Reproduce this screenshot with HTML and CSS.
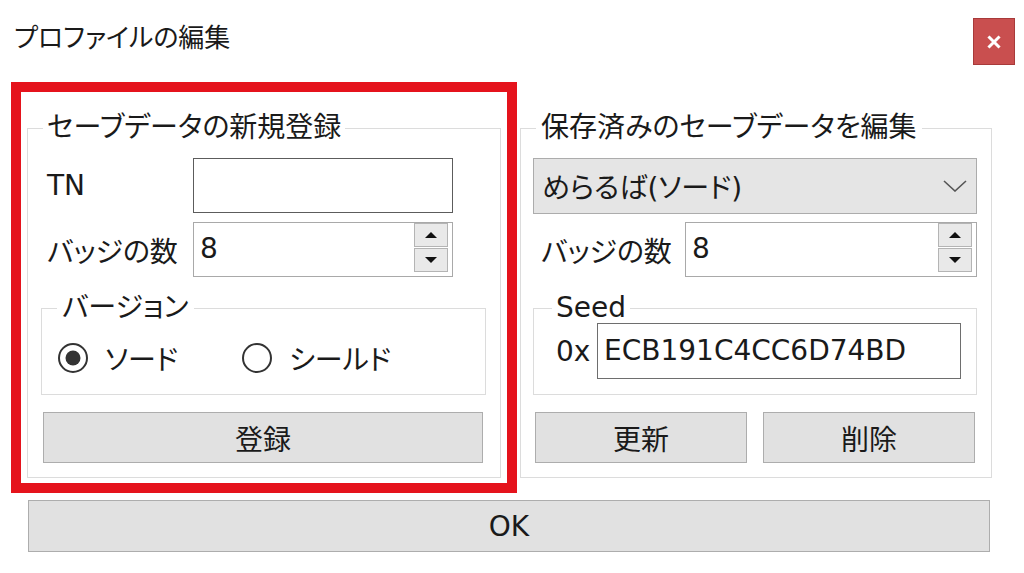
FILE: index.html
```html
<!DOCTYPE html>
<html lang="ja">
<head>
<meta charset="utf-8">
<title>プロファイルの編集</title>
<link rel="stylesheet" href="styles.css">
</head>
<body>
<div class="dialog">
  <header class="titlebar">
    <h1 class="title">プロファイルの編集</h1>
    <div class="close">
      <svg width="14" height="14" viewBox="0 0 14 14"><path d="M2.5 2.5 L11.5 11.5 M11.5 2.5 L2.5 11.5" stroke="#fff" stroke-width="3" stroke-linecap="square"/></svg>
    </div>
  </header>
  <main class="main">
    <div class="highlight">
      <fieldset class="group group-new">
        <legend>セーブデータの新規登録</legend>
        <div class="row">
          <span class="label">TN</span>
          <div class="textbox focus"></div>
        </div>
        <div class="row row-gap">
          <span class="label">バッジの数</span>
          <div class="spinbox">
            <span class="value">8</span>
            <div class="spin"><span class="spin-btn"><i class="tri-up"></i></span><span class="spin-btn"><i class="tri-down"></i></span></div>
          </div>
        </div>
        <fieldset class="group sub version">
          <legend>バージョン</legend>
          <div class="radios">
            <span class="radio radio-first">
              <svg width="32" height="32" viewBox="0 0 32 32"><circle cx="16" cy="16" r="14" fill="#fff" stroke="#333" stroke-width="2"/><circle cx="16" cy="16" r="7.5" fill="#333"/></svg>
              <span>ソード</span>
            </span>
            <span class="radio">
              <svg width="32" height="32" viewBox="0 0 32 32"><circle cx="16" cy="16" r="14" fill="#fff" stroke="#333" stroke-width="2"/></svg>
              <span>シールド</span>
            </span>
          </div>
        </fieldset>
        <div class="btn btn-wide">登録</div>
      </fieldset>
    </div>
    <fieldset class="group group-edit">
      <legend>保存済みのセーブデータを編集</legend>
      <div class="combo">
        <span>めらるば(ソード)</span>
        <svg class="chevron" width="24" height="12" viewBox="0 0 24 12"><path d="M1 1 L12 11 L23 1" fill="none" stroke="#555" stroke-width="1.6"/></svg>
      </div>
      <div class="row row-gap row-edit">
        <span class="label label-edit">バッジの数</span>
        <div class="spinbox spinbox-edit">
          <span class="value">8</span>
          <div class="spin"><span class="spin-btn"><i class="tri-up"></i></span><span class="spin-btn"><i class="tri-down"></i></span></div>
        </div>
      </div>
      <fieldset class="group sub seed">
        <legend>Seed</legend>
        <div class="seed-row">
          <span class="prefix">0x</span>
          <div class="textbox seed-box">ECB191C4CC6D74BD</div>
        </div>
      </fieldset>
      <div class="btn-pair">
        <div class="btn">更新</div>
        <div class="btn">削除</div>
      </div>
    </fieldset>
  </main>
  <div class="btn ok">OK</div>
</div>
</body>
</html>
```

FILE: styles.css
```css
html, body {
  margin: 0;
  padding: 0;
  background: #fff;
}
body {
  width: 1024px;
  height: 573px;
  overflow: hidden;
  font-family: "DejaVu Sans", "Noto Sans CJK JP", sans-serif;
  font-feature-settings: "palt";
  font-size: 28px;
  color: #1a1a1a;
}
.dialog {
  display: flex;
  flex-direction: column;
}
.titlebar {
  display: flex;
  justify-content: space-between;
  align-items: flex-start;
  height: 82px;
}
.title {
  margin: 0;
  padding: 22px 0 0 14px;
  font-size: 26px;
  font-weight: normal;
  line-height: 32px;
}
.close {
  width: 42px;
  height: 47px;
  margin: 18px 9px 0 0;
  box-sizing: border-box;
  background: #c94f4f;
  border: 1px solid #a83a3a;
  display: flex;
  align-items: center;
  justify-content: center;
}
.main {
  display: flex;
  align-items: flex-start;
  padding-left: 11px;
}
.highlight {
  width: 506px;
  box-sizing: border-box;
  border: 10px solid #e5131c;
  padding: 18px 6px 5px 6px;
}
.group {
  margin: 0;
  min-width: 0;
  box-sizing: border-box;
  border: 1px solid #dcdcdc;
}
.group > legend {
  line-height: 36px;
  height: 36px;
  padding: 0 4px;
}
.group-new {
  width: 474px;
  padding: 12px 14px 14px 13px;
}
.group-new > legend {
  margin-left: 2px;
}
.group-edit {
  width: 472px;
  margin-left: 3px;
  margin-top: 28px;
  padding: 12px 14px 14px 12px;
}
.group-edit > legend {
  margin-left: 3px;
  padding: 0 5px;
}
.row {
  display: flex;
  align-items: center;
  height: 55px;
  padding-left: 6px;
}
.row-gap {
  margin-top: 9px;
}
.row-edit {
  margin-top: 8px;
  padding-left: 8px;
}
.label {
  width: 146px;
  flex: none;
}
.label-edit {
  width: 144px;
}
.textbox {
  box-sizing: border-box;
  width: 260px;
  height: 55px;
  border: 1px solid #7a7a7a;
  background: #fff;
}
.textbox.focus {
  border-color: #5c5c5c;
}
.spinbox {
  box-sizing: border-box;
  width: 260px;
  height: 55px;
  border: 1px solid #a9a9a9;
  background: #fff;
  display: flex;
  align-items: flex-start;
}
.spinbox-edit {
  width: 292px;
}
.value {
  flex: 1;
  padding-left: 6px;
  line-height: 52px;
}
.spin {
  width: 34px;
  height: 49px;
  margin-right: 4px;
  display: flex;
  flex-direction: column;
}
.spin-btn {
  flex: 1;
  box-sizing: border-box;
  border: 1px solid #b4b4b4;
  background: #e9e9e9;
  display: flex;
  align-items: center;
  justify-content: center;
}
.spin-btn + .spin-btn {
  margin-top: 1px;
}
.tri-up, .tri-down {
  width: 0;
  height: 0;
  border-left: 6px solid transparent;
  border-right: 6px solid transparent;
}
.tri-up {
  border-bottom: 6px solid #111;
}
.tri-down {
  border-top: 6px solid #111;
}
.sub {
  margin-top: 16px;
}
.sub > legend {
  line-height: 30px;
  height: 30px;
}
.version {
  padding: 12px 0 13px 15px;
}
.version > legend {
  padding: 0 5px;
}
.radios {
  display: flex;
  align-items: center;
  height: 46px;
}
.radio {
  display: flex;
  align-items: center;
  gap: 16px;
}
.radio-first {
  width: 184px;
}
.btn {
  box-sizing: border-box;
  height: 51px;
  background: #e1e1e1;
  border: 1px solid #adadad;
  display: flex;
  align-items: center;
  justify-content: center;
}
.btn-wide {
  margin: 17px 3px 0 2px;
}
.combo {
  box-sizing: border-box;
  height: 56px;
  background: #e5e5e5;
  border: 1px solid #acacac;
  display: flex;
  align-items: center;
  justify-content: space-between;
  padding: 0 8px 0 8px;
}
.chevron {
  margin-right: 1px;
}
.seed {
  padding: 0 15px 15px 22px;
}
.seed > legend {
  margin-left: -4px;
  padding: 0 4px;
}
.seed-row {
  display: flex;
  align-items: center;
  height: 56px;
}
.prefix {
  width: 41px;
  flex: none;
}
.seed-box {
  width: 366px;
  height: 56px;
  padding-left: 6px;
  line-height: 54px;
  border-color: #6e6e6e;
}
.btn-pair {
  display: flex;
  gap: 16px;
  margin: 17px 2px 0 2px;
}
.btn-pair .btn {
  flex: 1;
}
.ok {
  width: 962px;
  height: 52px;
  margin: 7px 0 0 28px;
}
```
